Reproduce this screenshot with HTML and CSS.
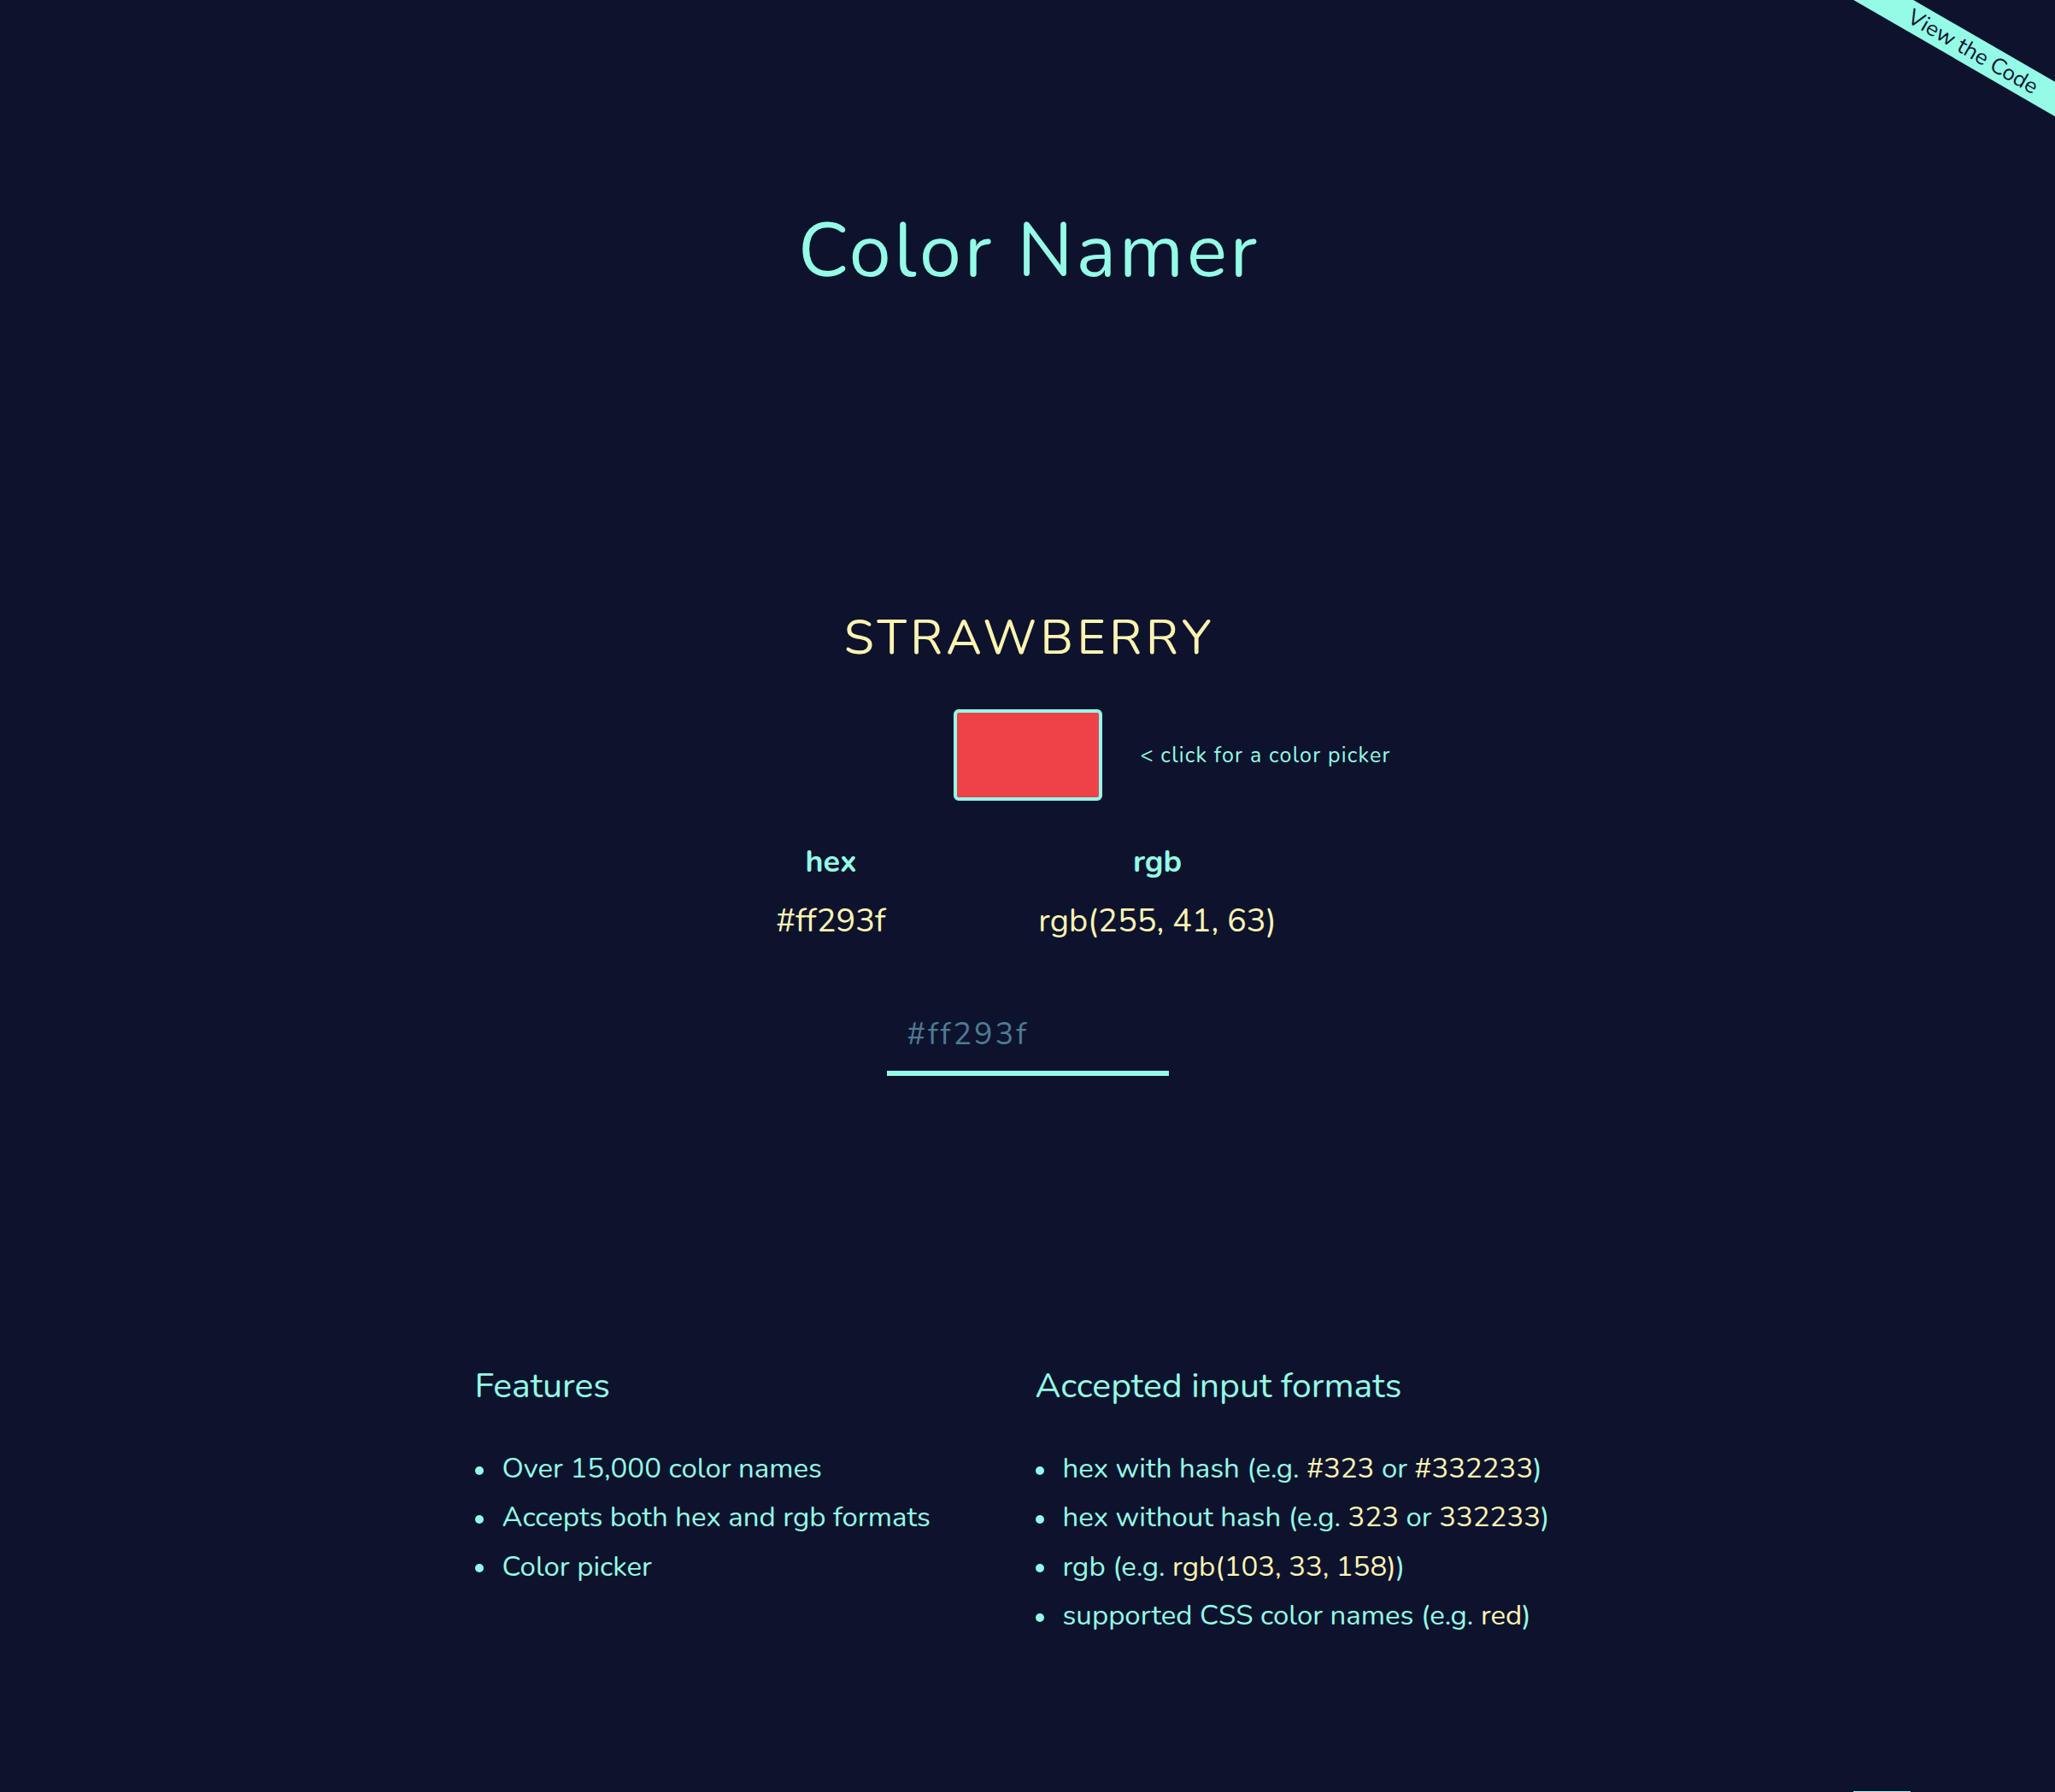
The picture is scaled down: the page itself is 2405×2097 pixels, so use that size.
FILE: index.html
```html
<!DOCTYPE html>
<html lang="en">
<head>
<meta charset="utf-8">
<title>Color Namer</title>
<link rel="stylesheet" href="styles.css">
</head>
<body>
<div class="ribbon-wrap"><a class="ribbon" href="#">View the Code</a></div>

<main class="app">
  <h1 class="title">Color Namer</h1>

  <h2 class="color-name">STRAWBERRY</h2>

  <div class="swatch-row">
    <div class="swatch"></div>
    <span class="swatch-hint">&lt; click for a color picker</span>
  </div>

  <div class="values">
    <div class="label">hex</div>
    <div class="label">rgb</div>
    <div class="value">#ff293f</div>
    <div class="value">rgb(255, 41, 63)</div>
  </div>

  <input class="color-input" type="text" placeholder="#ff293f">

  <section class="info">
    <div class="info-col">
      <h3 class="info-title">Features</h3>
      <ul class="info-list">
        <li>Over 15,000 color names</li>
        <li>Accepts both hex and rgb formats</li>
        <li>Color picker</li>
      </ul>
    </div>
    <div class="info-col">
      <h3 class="info-title">Accepted input formats</h3>
      <ul class="info-list">
        <li>hex with hash (e.g. <span class="hl">#323</span> or <span class="hl">#332233</span>)</li>
        <li>hex without hash (e.g. <span class="hl">323</span> or <span class="hl">332233</span>)</li>
        <li>rgb (e.g. <span class="hl">rgb(103, 33, 158)</span>)</li>
        <li>supported CSS color names (e.g. <span class="hl">red</span>)</li>
      </ul>
    </div>
  </section>
</main>
<div class="corner-tab"></div>
</body>
</html>
```
FILE: styles.css
```css
html, body {
  margin: 0;
  padding: 0;
  background: #0d132d;
}
body {
  font-family: "Nunito", Lato, "Noto Sans", sans-serif;
  color: #94fce6;
  position: relative;
  min-height: 2097px;
}

.ribbon-wrap {
  position: absolute;
  top: 0;
  right: 0;
  width: 300px;
  height: 200px;
  overflow: hidden;
}
.ribbon {
  position: absolute;
  left: 4px;
  top: 43px;
  width: 400px;
  height: 35px;
  line-height: 35px;
  background: #94fce6;
  color: #0d132d;
  font-size: 26px;
  text-align: center;
  text-decoration: none;
  transform: rotate(30deg);
}

.app {
  display: flex;
  flex-direction: column;
  align-items: center;
}

.title {
  margin: 250px 0 0;
  font-size: 88px;
  line-height: 88px;
  font-weight: 400;
  letter-spacing: 3.8px;
  padding-left: 3.8px;
  color: #94fce6;
}

.color-name {
  margin: 380px 0 0;
  font-size: 57px;
  line-height: 57px;
  font-weight: 400;
  letter-spacing: 4.5px;
  padding-left: 4.5px;
  color: #fef4b2;
}

.swatch-row {
  position: relative;
  margin-top: 55px;
}
.swatch {
  width: 174px;
  height: 107px;
  box-sizing: border-box;
  border: 4px solid #94fce6;
  border-radius: 6px;
  background: #ee4249;
}
.swatch-hint {
  position: absolute;
  left: calc(100% + 45px);
  top: 50%;
  transform: translateY(-50%);
  white-space: nowrap;
  font-size: 25px;
  letter-spacing: 1.2px;
  color: #94fce6;
}

.values {
  display: grid;
  grid-template-columns: 304px 460px;
  row-gap: 32px;
  margin-top: 54px;
  text-align: center;
}
.label {
  font-size: 36px;
  line-height: 36px;
  font-weight: 700;
  color: #94fce6;
}
.value {
  font-size: 38px;
  line-height: 38px;
  color: #fef4b2;
}

.color-input {
  margin-top: 91px;
  width: 330px;
  height: 71px;
  box-sizing: border-box;
  padding: 0 0 21px 24px;
  border: none;
  border-bottom: 6px solid #94fce6;
  background: transparent;
  font-family: "Nunito", Lato, "Noto Sans", sans-serif;
  font-size: 36px;
  letter-spacing: 3px;
  color: #fef4b2;
  outline: none;
}
.color-input::placeholder {
  color: #4d7b93;
  opacity: 1;
}

.info {
  margin-top: 342px;
  width: 1294px;
  display: grid;
  grid-template-columns: 1fr 1fr;
  column-gap: 18px;
}
.info-title {
  margin: 0;
  font-size: 41px;
  line-height: 42px;
  font-weight: 400;
  color: #94fce6;
}
.info-list {
  list-style: none;
  margin: 47px 0 0;
  padding: 0;
}
.info-list li {
  position: relative;
  padding-left: 32px;
  font-size: 33px;
  line-height: 57.3px;
  color: #94fce6;
}
.info-list li::before {
  content: "";
  position: absolute;
  left: 0;
  top: 50%;
  width: 10px;
  height: 10px;
  margin-top: -3px;
  border-radius: 50%;
  background: #94fce6;
}
.hl {
  color: #fef4b2;
}

.corner-tab {
  position: absolute;
  top: 2096px;
  right: 169px;
  width: 67px;
  height: 1px;
  background: #94fce6;
}
```
